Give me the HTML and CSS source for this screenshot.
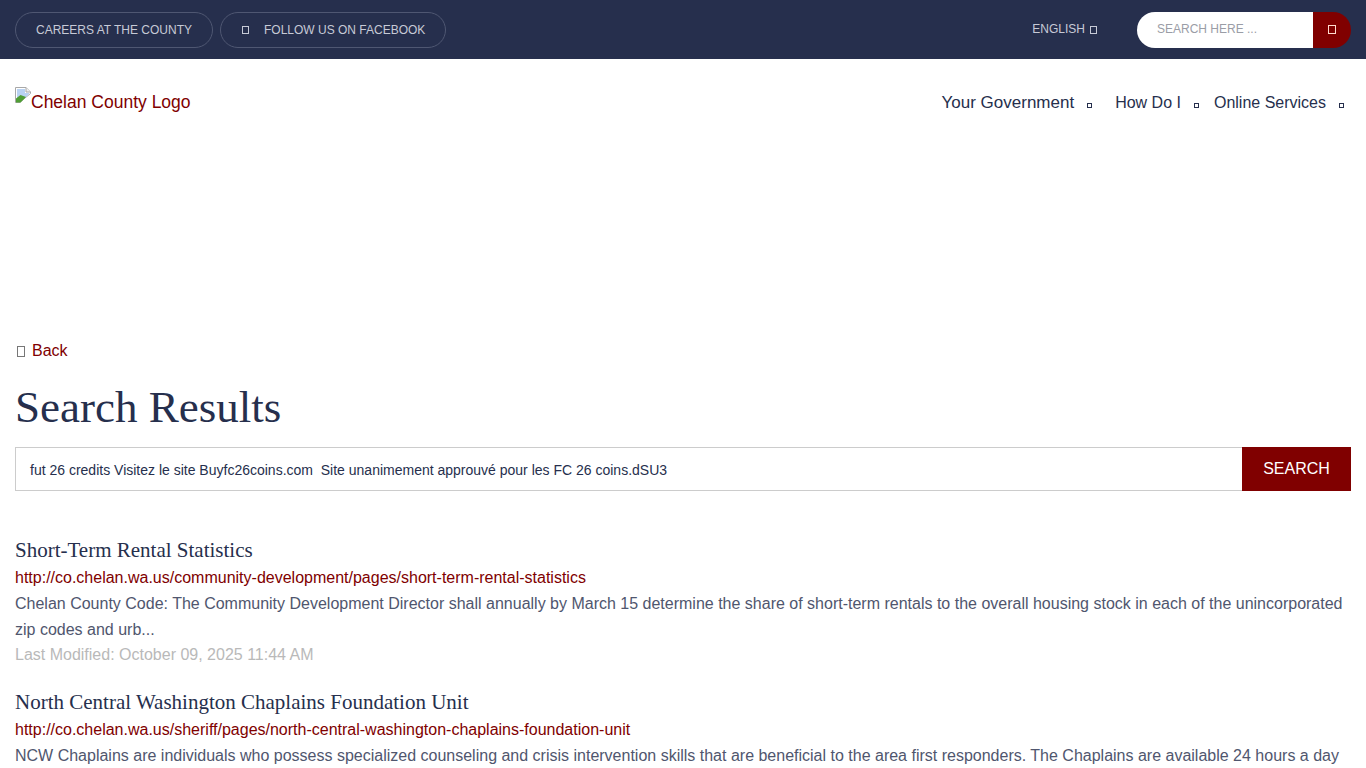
FILE: index.html
```html
<!DOCTYPE html>
<html lang="en">
<head>
<meta charset="utf-8">
<title>Search Results</title>
<link rel="stylesheet" href="styles.css">
</head>
<body>
<header class="topbar">
  <div class="topbar-left">
    <a class="pill pill-careers">CAREERS AT THE COUNTY</a>
    <a class="pill pill-fb"><span class="tofu tofu-fb"></span>FOLLOW US ON FACEBOOK</a>
  </div>
  <div class="topbar-right">
    <a class="lang">ENGLISH<span class="tofu tofu-lang"></span></a>
    <div class="topsearch">
      <div class="topsearch-input">SEARCH HERE ...</div>
      <div class="topsearch-btn"><span class="tofu tofu-search"></span></div>
    </div>
  </div>
</header>
<nav class="mainnav">
  <a class="logo">
    <svg class="broken" width="16" height="16" viewBox="0 0 16 16"><path d="M0.5 0.5H11L15.500 5V6.500L10 11L5 15.500H0.500Z" fill="#fff" stroke="#a8a8a8"/><path d="M11 0.5V5H15.500" fill="#eee" stroke="#a8a8a8"/><path d="M2 2H10V6H14V7L10 11H2Z" fill="#b9d2f2"/><path d="M1 15.500V11.500L5.500 8L11 10L5.500 15.500Z" fill="#4f9e35"/></svg><span>Chelan County Logo</span>
  </a>
  <ul class="menu">
    <li class="menu-gov">Your Government<span class="tofu tofu-nav"></span></li>
    <li class="menu-how">How Do I<span class="tofu tofu-nav"></span></li>
    <li class="menu-online">Online Services<span class="tofu tofu-nav"></span></li>
  </ul>
</nav>
<main class="content">
  <a class="back"><span class="tofu tofu-back"></span>Back</a>
  <h1>Search Results</h1>
  <form class="searchform">
    <div class="searchfield">fut 26 credits Visitez le site Buyfc26coins.com&nbsp; Site unanimement approuvé pour les FC 26 coins.dSU3</div>
    <div class="searchbtn">SEARCH</div>
  </form>
  <section class="results">
    <article class="result">
      <h2>Short-Term Rental Statistics</h2>
      <a class="url">http://co.chelan.wa.us/community-development/pages/short-term-rental-statistics</a>
      <p class="desc">Chelan County Code: The Community Development Director shall annually by March 15 determine the share of short-term rentals to the overall housing stock in each of the unincorporated zip codes and urb...</p>
      <p class="date">Last Modified: October 09, 2025 11:44 AM</p>
    </article>
    <article class="result">
      <h2>North Central Washington Chaplains Foundation Unit</h2>
      <a class="url">http://co.chelan.wa.us/sheriff/pages/north-central-washington-chaplains-foundation-unit</a>
      <p class="desc">NCW Chaplains are individuals who possess specialized counseling and crisis intervention skills that are beneficial to the area first responders. The Chaplains are available 24 hours a day</p>
    </article>
  </section>
</main>
</body>
</html>
```
FILE: styles.css
```css
* { box-sizing: border-box; }
html, body { margin: 0; padding: 0; height: 768px; overflow: hidden; }
body { font-family: "Liberation Sans", Arial, sans-serif; background: #fff; color: #262f4d; }
.tofu { display: inline-block; border: 1px solid currentColor; flex: none; }

.topbar { height: 59px; background: #262f4d; display: flex; justify-content: space-between; align-items: flex-start; padding: 12px 15px 0; color: #c6cad6; }
.topbar-left { display: flex; gap: 7px; }
.pill { height: 36px; border: 1px solid #4f5772; border-radius: 18px; font-size: 12px; line-height: 34px; display: flex; }
.pill-careers { width: 198px; padding-left: 20px; }
.pill-fb { width: 226px; padding-left: 21px; align-items: center; }
.tofu-fb { width: 7px; height: 8px; margin-right: 15px; }
.topbar-right { display: flex; }
.lang { font-size: 12px; line-height: 34px; display: flex; margin-right: 40px; }
.tofu-lang { width: 7px; height: 8px; margin: 14px 0 0 5px; }
.topsearch { display: flex; width: 214px; height: 36px; }
.topsearch-input { width: 176px; background: #fff; border-radius: 18px 0 0 18px; color: #9a9da6; font-size: 12px; line-height: 34px; padding-left: 20px; }
.topsearch-btn { width: 38px; background: #800000; border-radius: 0 18px 18px 0; color: #ffdccf; display: flex; align-items: center; justify-content: center; }
.tofu-search { width: 8px; height: 9px; margin-right: 1px; margin-top: -1px; }

.mainnav { height: 273px; padding: 28px 22px 0 15px; display: flex; justify-content: space-between; align-items: flex-start; }
.logo { color: #800000; font-size: 17.500px; display: flex; line-height: 30px; }
.broken { flex: none; }
.menu { list-style: none; margin: 0; padding: 0; display: flex; font-size: 16px; line-height: 32px; }
.menu li { display: flex; }
.tofu-nav { width: 5px; height: 5px; margin-top: 16px; margin-left: 13px; }
.menu-gov { margin-right: 23px; font-size: 17px; }
.menu-how { margin-right: 15px; }
.menu-online .tofu-nav { margin-left: 13px; }

.content { padding: 1px 15px 0; }
.back { display: flex; align-items: center; color: #800000; font-size: 16px; line-height: 36px; height: 36px; }
.tofu-back { width: 8px; height: 11px; color: #777; margin: 1px 7px 0 2px; }
h1 { font-family: "Liberation Serif", "Times New Roman", serif; font-weight: 400; font-size: 45px; line-height: 50px; margin: 13px 0 15px; color: #262f4d; }
.searchform { display: flex; height: 44px; }
.searchfield { flex: 1; border: 1px solid #ccc; border-right: 0; font-size: 14px; line-height: 44px; padding-left: 14px; color: #262f4d; }
.searchbtn { width: 109px; background: #800000; color: #fff; font-size: 16px; line-height: 43px; text-align: center; }
.results { padding-top: 45px; }
.result { margin-bottom: 21px; }
.result h2 { font-family: "Liberation Serif", "Times New Roman", serif; font-weight: 400; font-size: 21px; line-height: 29px; margin: 0; color: #262f4d; }
.url { display: block; color: #800000; font-size: 16px; line-height: 26px; }
.desc { margin: 0; font-size: 16px; line-height: 26px; color: #50566e; }
.date { margin: 0; font-size: 16px; line-height: 24px; color: #b9b9b9; }
```
